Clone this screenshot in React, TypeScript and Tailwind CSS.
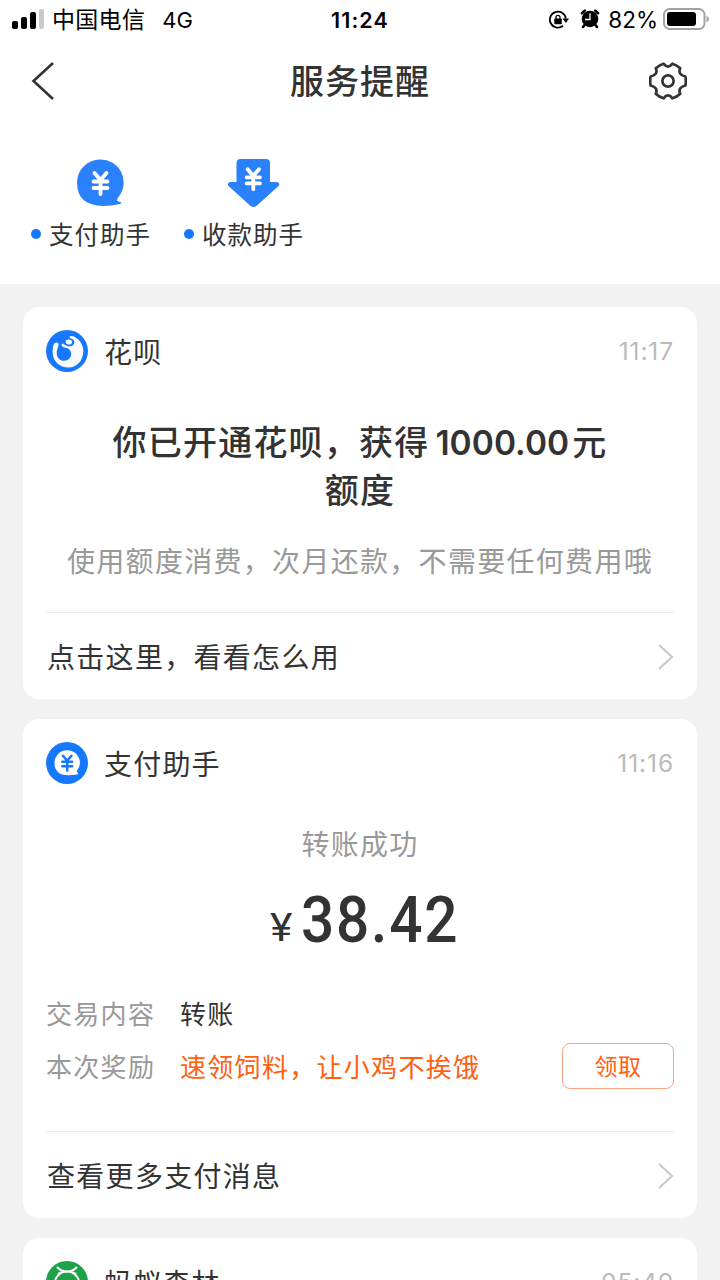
import React from "react";

const Yen = ({ className }: { className?: string }) => (
  <g className={className} fill="none" strokeLinecap="round" strokeLinejoin="round">
    <path d="M-6 -10 L0 -3 L6 -10 M0 -3 V11 M-7 -1.5 H7 M-7 5 H7" />
  </g>
);

const PayIcon = () => (
  <svg width="48" height="48" viewBox="0 0 48 48">
    <path
      d="M23 .5 A23 23 0 0 1 41.500 38 Q39.500 40.500 40.300 41.700 Q41.500 43 43.700 43 Q45 44 43 44.900 Q35 47 26 47 Q0 46.500 0 23.500 A23 23 0 0 1 23 .5 Z"
      fill="#2a81fb"
    />
    <g transform="translate(23.500 24)">
      <Yen className="stroke-white stroke-[3.8]" />
    </g>
  </svg>
);

const CollectIcon = () => (
  <svg width="52" height="50" viewBox="0 0 52 50">
    <path
      d="M12.500 0 H38 Q42 0 42 4 V23 H48.500 Q53 24 50.500 27 L29 46.500 Q25.500 49.500 22 46.500 L.5 27 Q-2 24 2.500 23 H8.500 V4 Q8.500 0 12.500 0 Z"
      fill="#2a81fb"
    />
    <g transform="translate(25.300 19.700) scale(.95)">
      <Yen className="stroke-white stroke-[4]" />
    </g>
  </svg>
);

const HuabeiLogo = () => (
  <svg width="42" height="42" viewBox="0 0 42 42">
    <circle cx="21" cy="21" r="21" fill="#1677ff" />
    <path
      d="M8.500 13.300 C10 11.800 12.800 12.300 12.600 14.500 C12.300 17 10.700 19.500 10.700 23 C10.700 27.500 13.800 30.800 18 30.800 C22.300 30.800 25.200 27.500 25.200 23.800 C25.200 21.500 24 19.500 22 18.500 C19.800 17.600 17.500 17.500 15.700 16 C14.800 14.500 16.300 13.200 18.200 14.200 C20.500 16.200 23.500 17 26.500 15.700 C28.800 14.200 28.800 11 27.200 9.500 C26 8.500 23.300 8.500 23.500 7 C23.800 5.300 28 5.800 31 8.500 C35 11.500 37.300 16 37.300 21 C37.300 30.500 31 37.600 22.500 37.600 C13.500 37.600 6.800 31 6.600 22.500 C6.500 18.500 7 15 8.500 13.300 Z"
      fill="#f7fbff"
    />
    <ellipse cx="22.800" cy="12" rx="3.200" ry="2.500" transform="rotate(12 22.800 12)" fill="#fff" />
  </svg>
);

const AssistantLogo = () => (
  <svg width="42" height="42" viewBox="0 0 42 42">
    <circle cx="21" cy="21" r="21" fill="#1677ff" />
    <path
      d="M21.200 8.200 A12.500 12.500 0 0 1 31.500 28 Q30 30 31.500 30.600 Q33.200 31.800 31 32.600 Q27 33.300 22 33.300 Q8.500 33 8.500 21 A12.500 12.500 0 0 1 21.200 8.200 Z"
      fill="#fff"
    />
    <g transform="translate(21.200 20.800) scale(.7)">
      <Yen className="stroke-[#1677ff] stroke-[3.6]" />
    </g>
  </svg>
);

const ForestLogo = () => (
  <svg width="42" height="42" viewBox="0 0 42 42">
    <circle cx="21" cy="21" r="21" fill="#1fa14a" />
    <g fill="none" stroke="#fff" strokeWidth="1.900" strokeLinecap="round">
      <path d="M11.500 6.500 Q15 10.500 21 10.500 Q27 10.500 30.500 6.500" />
      <path d="M17 10.500 L12.500 12.500 M25 10.500 L29.500 12.500" />
      <circle cx="21" cy="23" r="12.400" />
    </g>
  </svg>
);

const StatusBar = () => (
  <div className="h-10 pl-3 pr-[11px] flex items-center justify-between text-black">
    <div className="w-[240px] flex items-center">
      <div className="flex items-end gap-[3px] h-5 mr-2 -mt-0.5">
        <span className="w-1.5 h-2 rounded-[2px] bg-black" />
        <span className="w-1.5 h-3 rounded-[2px] bg-black" />
        <span className="w-1.5 h-[17px] rounded-[2px] bg-black" />
        <span className="w-[5px] h-5 rounded-[2px] bg-[#cbcbcb]" />
      </div>
      <span className="text-[23px] tracking-[0.3px] leading-10">中国电信</span>
      <span className="ml-[17px] text-[22px] leading-10">4G</span>
    </div>
    <span className="ml-[-1px] text-[21.5px] leading-10 font-semibold tracking-[1.100px]">11:24</span>
    <div className="w-[240px] flex items-center justify-end">
      <svg width="20" height="20" viewBox="0 0 20 20" className="mr-[11px]">
        <path d="M14 15.800 A8 8 0 1 1 16.800 8.500" fill="none" stroke="#000" strokeWidth="1.800" />
        <path d="M13.500 8.500 H20 L17 13 Z" />
        <rect x="5.300" y="8.500" width="7.500" height="5.700" rx=".8" />
        <path d="M7 9 V7.300 a2 2 0 0 1 4 0 V9" fill="none" stroke="#000" strokeWidth="1.300" />
      </svg>
      <svg width="20" height="20" viewBox="0 0 20 20" className="mr-2 -mt-0.5">
        <circle cx="10" cy="10" r="8.300" />
        <path d="M2 4.300 L4.800 1.600 M18 4.300 L15.200 1.600 M4.500 16 L3 18 M15.500 16 L17 18" stroke="#000" strokeWidth="2.600" strokeLinecap="round" />
        <path d="M10 4.500 V10.500 H5" fill="none" stroke="#fff" strokeWidth="1.300" />
      </svg>
      <span className="text-[22.5px] leading-10">82%</span>
      <svg width="46" height="22" viewBox="0 0 46 22" className="ml-[5px] -mt-0.5">
        <rect x="1" y="1" width="40.500" height="20" rx="5.500" fill="none" stroke="#a3a3a3" strokeWidth="2" />
        <rect x="4" y="4" width="29" height="14" rx="3" />
        <path d="M43.500 7.500 Q46 9 46 11 Q46 13 43.500 14.500 Z" fill="#a3a3a3" />
      </svg>
    </div>
  </div>
);

const NavBar = () => (
  <div className="h-[82px] pl-[31px] pr-[33px] flex items-center justify-between">
    <svg width="38" height="38" viewBox="0 0 38 38" fill="none" stroke="#333" strokeWidth="2.600">
      <path d="M22 1 L2.500 19 L22 37" />
    </svg>
    <h1 className="ml-0.5 pt-px text-[34px] leading-[48px] tracking-[1px] font-medium">服务提醒</h1>
    <svg width="38" height="38" viewBox="0 0 38 38" fill="none" stroke="#333" strokeWidth="2.700" strokeLinejoin="round">
      <path d="M36.400 14.500 Q37.200 19 36.400 23.500 Q28.500 25.500 31.200 31.700 Q27.800 35 23.500 36.300 Q19 30.500 14.500 36.300 Q10.200 35 6.800 31.700 Q9.500 25.500 1.600 23.500 Q.8 19 1.600 14.500 Q9.500 12.500 6.800 6.300 Q10.200 3 14.500 1.700 Q19 7.500 23.500 1.700 Q27.800 3 31.200 6.300 Q28.500 12.500 36.400 14.500 Z" />
      <circle cx="19" cy="19" r="5.600" />
    </svg>
  </div>
);

const Shortcut = ({ icon, label }: { icon: React.ReactNode; label: string }) => (
  <div className="flex flex-col items-center">
    <div className="h-[50px] pl-[19px] flex items-start">{icon}</div>
    <div className="mt-[7px] flex items-center">
      <span className="size-2.5 rounded-full bg-[#1677ff] mr-2" />
      <span className="pt-0.5 text-[24.5px] leading-[34px] tracking-[1px]">{label}</span>
    </div>
  </div>
);

const CardHeader = ({ logo, name, time }: { logo: React.ReactNode; name: string; time: string }) => (
  <div className="h-[42px] flex items-center">
    {logo}
    <span className="pt-[3px] ml-4 flex-1 text-[28px] leading-[42px] tracking-[1.200px]">{name}</span>
    <span className="text-[24.5px] leading-[42px] tracking-[0.900px] text-[#bbb]">{time}</span>
  </div>
);

const CardFooter = ({ text }: { text: string }) => (
  <div className="border-t border-[#ebebeb] h-[88px] flex items-center justify-between">
    <span className="pt-[3px] pl-px text-[28px] leading-[42px] tracking-[1.300px]">{text}</span>
    <svg width="17" height="26" viewBox="0 0 17 26" fill="none" stroke="#c8cac8" strokeWidth="2.200">
      <path d="M2 1 L15 13 L2 25" />
    </svg>
  </div>
);

export default function App() {
  return (
    <div className="w-[720px] h-[1280px] overflow-hidden bg-[#f2f2f2] text-[#333] font-[Inter,'Noto_Sans_CJK_SC',sans-serif]">
      <header className="h-[284px] bg-white">
        <StatusBar />
        <NavBar />
        <div className="pt-[37px] pl-[31px] flex gap-[33px]">
          <Shortcut icon={<PayIcon />} label="支付助手" />
          <Shortcut icon={<CollectIcon />} label="收款助手" />
        </div>
      </header>

      <main className="px-[23px] pt-[23px] flex flex-col gap-5">
        <section className="h-[392px] bg-white rounded-2xl px-[23px] pt-[23px]">
          <CardHeader logo={<HuabeiLogo />} name="花呗" time="11:17" />
          <h2 className="mt-[47px] text-center text-[34px] leading-[48px] tracking-[1.200px] font-medium">
            你已开通花呗，获得<span className="ml-1.5 mr-[3px] text-[33.5px] font-semibold tracking-[0.050px]">1000.00</span>元
            <br />
            额度
          </h2>
          <p className="mt-[26px] mb-[29px] -mx-2 text-center whitespace-nowrap text-[28px] leading-[42px] tracking-[1.300px] text-[#999]">
            使用额度消费，次月还款，不需要任何费用哦
          </p>
          <CardFooter text="点击这里，看看怎么用" />
        </section>

        <section className="h-[499px] bg-white rounded-2xl px-[23px] pt-[23px]">
          <CardHeader logo={<AssistantLogo />} name="支付助手" time="11:16" />
          <p className="mt-10 text-center text-[28px] leading-[42px] tracking-[1.200px] text-[#999]">转账成功</p>
          <div className="mt-[18px] h-[80px] pl-2.5 flex items-baseline justify-center font-[Roboto,sans-serif] font-medium">
            <span className="inline-block origin-bottom-left scale-x-[1.15] scale-y-[1.06] mr-3 text-[37px] leading-[72px] font-normal">¥</span>
            <span className="inline-block origin-left scale-x-90 -mr-[17px] text-[65px] leading-[72px] tracking-[2px]">38.42</span>
          </div>
          <div className="mt-[25px] flex text-[26px] leading-[52px] tracking-[1.300px]">
            <span className="w-[134px] text-[#999]">交易内容</span>
            <span>转账</span>
          </div>
          <div className="h-[52px] flex items-center text-[26px] leading-[52px] tracking-[1.300px]">
            <span className="pt-0.5 w-[134px] text-[#999]">本次奖励</span>
            <span className="pt-0.5 flex-1 text-[#ff6010]">速领饲料，让小鸡不挨饿</span>
            <button className="-mt-[3px] w-28 h-[46px] rounded-lg border border-[#f9a582] pt-1 text-[23px] leading-none tracking-[0.500px] text-[#ff6010]">
              领取
            </button>
          </div>
          <div className="mt-[38px]">
            <CardFooter text="查看更多支付消息" />
          </div>
        </section>

        <section className="h-[300px] shrink-0 bg-white rounded-2xl px-[23px] pt-[23px]">
          <CardHeader logo={<ForestLogo />} name="蚂蚁森林" time="05:49" />
        </section>
      </main>
    </div>
  );
}
